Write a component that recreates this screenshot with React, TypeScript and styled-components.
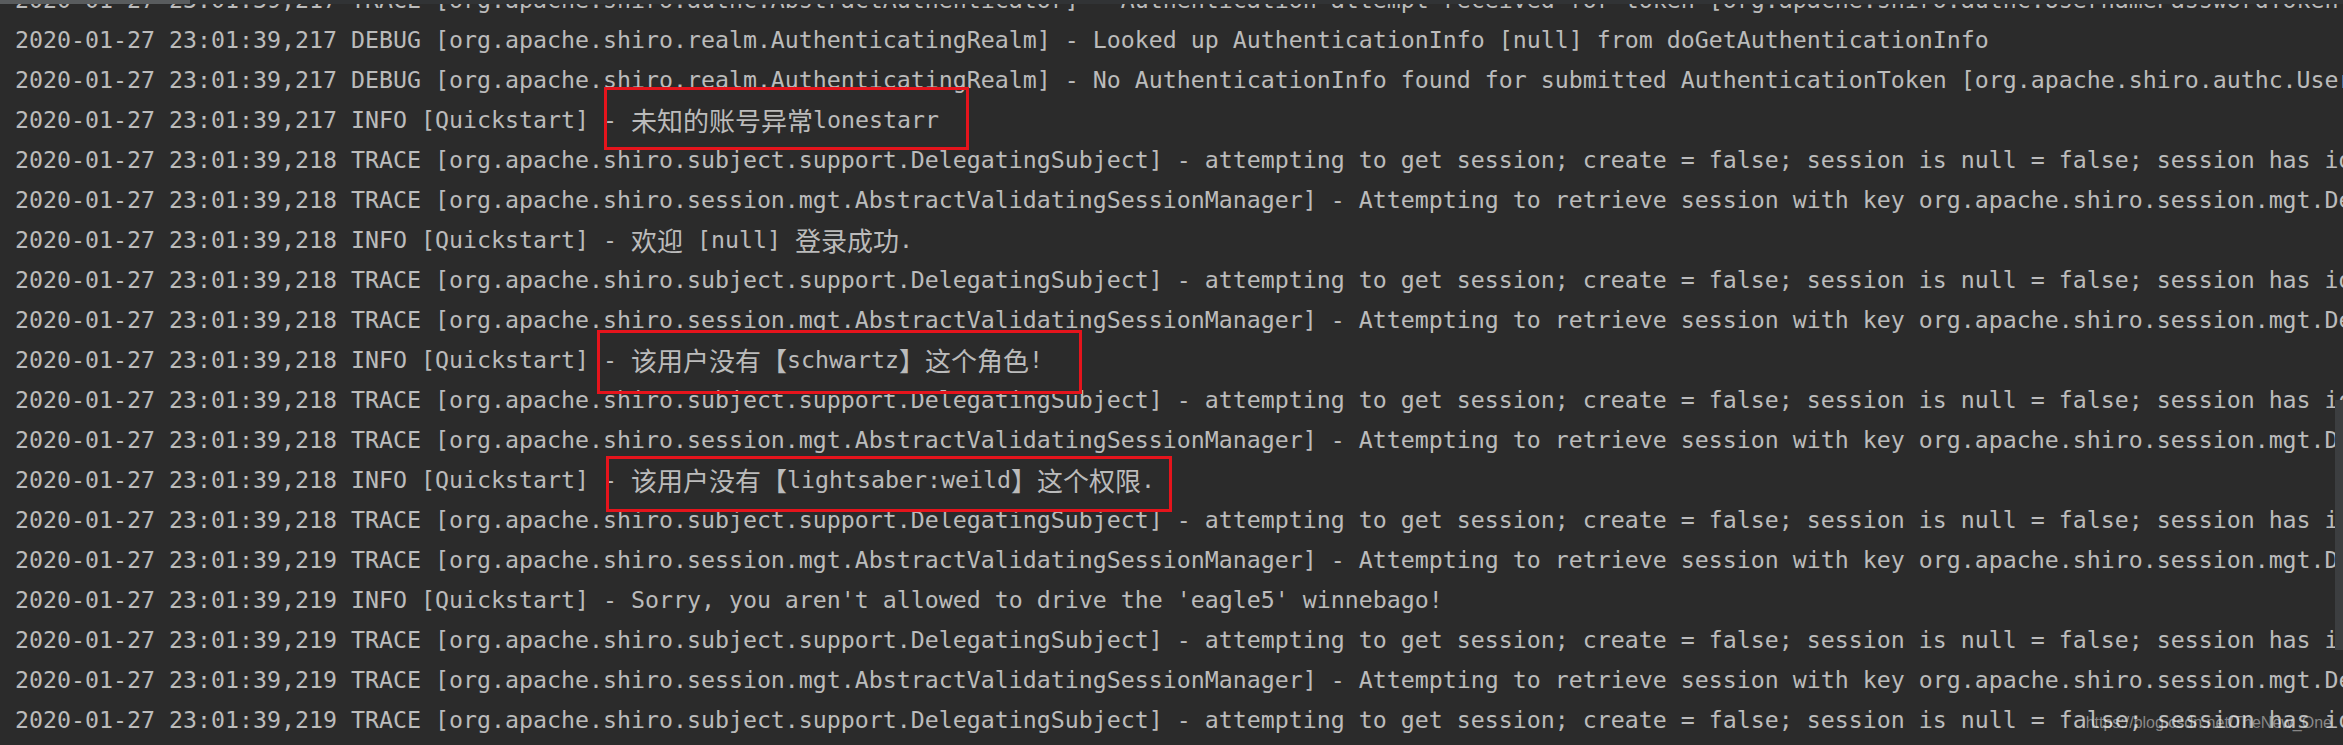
import React from "react";
import styled, { createGlobalStyle } from "styled-components";

const Global = createGlobalStyle`
  html, body {
    margin: 0;
    padding: 0;
    background: #2b2b2b;
  }
  body {
    overflow: hidden;
  }
`;

const Screen = styled.div`
  position: relative;
  width: 2343px;
  height: 745px;
  overflow: hidden;
  background: #2b2b2b;
`;

const Console = styled.div`
  height: 745px;
  box-sizing: border-box;
  padding: 0 0 5px 15px;
  display: flex;
  flex-direction: column;
  justify-content: flex-end;
  overflow: hidden;
`;

const Line = styled.div`
  flex: 0 0 40px;
  height: 40px;
  line-height: 40px;
  white-space: pre;
  font-family: "DejaVu Sans Mono", "Liberation Mono", monospace;
  font-size: 23.25px;
  color: #bbbbbb;
`;

const Cjk = styled.span`
  font-family: "Noto Sans CJK SC", "Noto Sans CJK JP", sans-serif;
  font-size: 26px;
  line-height: 26px;
  vertical-align: -3px;
`;

const Mark = styled.div<{ $x: number; $y: number; $w: number; $h: number }>`
  position: absolute;
  left: ${(p) => p.$x}px;
  top: ${(p) => p.$y}px;
  width: ${(p) => p.$w}px;
  height: ${(p) => p.$h}px;
  box-sizing: border-box;
  border: 3px solid #e5141c;
  pointer-events: none;
`;

const HScroll = styled.div`
  position: absolute;
  top: 0;
  left: 0;
  right: 0;
  height: 4px;
  display: flex;
  background: #313335;
`;

const HThumb = styled.div`
  width: 190px;
  background: #595c5e;
`;

const VThumb = styled.div`
  position: absolute;
  right: 0;
  top: 400px;
  width: 8px;
  height: 250px;
  background: #3c3e40;
`;

const Watermark = styled.div`
  position: absolute;
  right: 11px;
  bottom: 13px;
  font-family: "Liberation Sans", Arial, sans-serif;
  font-size: 16px;
  line-height: 18px;
  color: rgba(255, 255, 255, 0.45);
  white-space: nowrap;
`;

const DELEG =
  "TRACE [org.apache.shiro.subject.support.DelegatingSubject] - attempting to get session; create = false; session is null = false; session has id = true";
const VALID =
  "TRACE [org.apache.shiro.session.mgt.AbstractValidatingSessionManager] - Attempting to retrieve session with key org.apache.shiro.session.mgt.DefaultSessionKey@5a2e4553";
const QS = "INFO [Quickstart] - ";

const lines: string[] = [
  "2020-01-27 23:01:39,217 TRACE [org.apache.shiro.authc.AbstractAuthenticator] - Authentication attempt received for token [org.apache.shiro.authc.UsernamePasswordToken - lonestarr, rememberMe=false]",
  "2020-01-27 23:01:39,217 DEBUG [org.apache.shiro.realm.AuthenticatingRealm] - Looked up AuthenticationInfo [null] from doGetAuthenticationInfo",
  "2020-01-27 23:01:39,217 DEBUG [org.apache.shiro.realm.AuthenticatingRealm] - No AuthenticationInfo found for submitted AuthenticationToken [org.apache.shiro.authc.UsernamePasswordToken - lonestarr, rememberMe=false].  Returning null.",
  "2020-01-27 23:01:39,217 " + QS + "未知的账号异常lonestarr",
  "2020-01-27 23:01:39,218 " + DELEG,
  "2020-01-27 23:01:39,218 " + VALID,
  "2020-01-27 23:01:39,218 " + QS + "欢迎 [null] 登录成功.",
  "2020-01-27 23:01:39,218 " + DELEG,
  "2020-01-27 23:01:39,218 " + VALID,
  "2020-01-27 23:01:39,218 " + QS + "该用户没有【schwartz】这个角色!",
  "2020-01-27 23:01:39,218 " + DELEG,
  "2020-01-27 23:01:39,218 " + VALID,
  "2020-01-27 23:01:39,218 " + QS + "该用户没有【lightsaber:weild】这个权限.",
  "2020-01-27 23:01:39,218 " + DELEG,
  "2020-01-27 23:01:39,219 " + VALID,
  "2020-01-27 23:01:39,219 " + QS + "Sorry, you aren't allowed to drive the 'eagle5' winnebago!",
  "2020-01-27 23:01:39,219 " + DELEG,
  "2020-01-27 23:01:39,219 " + VALID,
  "2020-01-27 23:01:39,219 " + DELEG,
];

const CJK_RE = /([\u3000-\u303f\u4e00-\u9fff\uff00-\uffef]+)/;

function renderText(text: string) {
  return text
    .split(CJK_RE)
    .filter((s) => s.length > 0)
    .map((part, i) =>
      CJK_RE.test(part) ? <Cjk key={i}>{part}</Cjk> : <React.Fragment key={i}>{part}</React.Fragment>
    );
}

export default function App() {
  return (
    <Screen>
      <Global />
      <Console>
        {lines.map((l, i) => (
          <Line key={i}>{renderText(l)}</Line>
        ))}
      </Console>
      <HScroll>
        <HThumb />
      </HScroll>
      <VThumb />
      <Mark $x={604} $y={87} $w={365} $h={63} />
      <Mark $x={597} $y={330} $w={485} $h={64} />
      <Mark $x={606} $y={456} $w={566} $h={56} />
      <Watermark>https://blog.csdn.net/TheNew_One</Watermark>
    </Screen>
  );
}
